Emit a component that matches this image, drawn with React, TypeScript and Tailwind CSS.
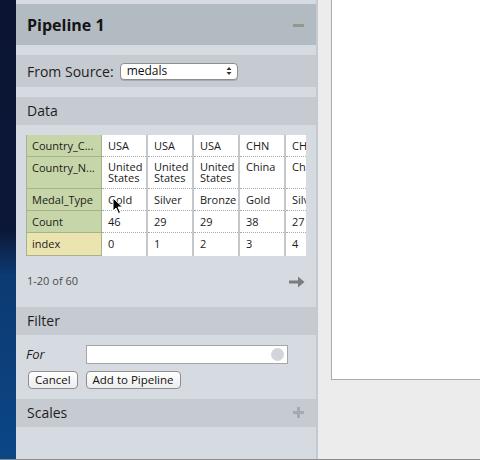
import React from 'react';

const FONT = { fontFamily: '"Open Sans", "Lucida Grande", "DejaVu Sans", sans-serif' };

const headers = ['Country_C...', 'Country_N...', 'Medal_Type', 'Count', 'index'];
const rowHeights = ['h-[22px]', 'h-[32px]', 'h-[22px]', 'h-[22px]', 'h-[23px]'];

const columns = [
  ['USA', 'United States', 'Gold', '46', '0'],
  ['USA', 'United States', 'Silver', '29', '1'],
  ['USA', 'United States', 'Bronze', '29', '2'],
  ['CHN', 'China', 'Gold', '38', '3'],
  ['CHN', 'China', 'Silver', '27', '4'],
];

const SectionHeader: React.FC<{ title: string; icon?: React.ReactNode }> = ({ title, icon }) => (
  <div className="flex h-[28px] items-center justify-between bg-[#c6cbd1] pb-[2px] pl-[11px] pr-[12px] text-[14px] text-[#1e1e1e]">
    <span>{title}</span>
    {icon}
  </div>
);

const Cursor = () => (
  <svg width="12" height="18" viewBox="0 0 12 18" className="absolute left-[112px] top-[197px]">
    <path d="M1 1 L1 14 L4 11 L6.5 16.5 L8.5 15.5 L6 10 L10.5 10 Z" fill="#000" stroke="#fff" strokeWidth="1" />
  </svg>
);

const DataTable = () => (
  <div className="flex w-[280px] overflow-hidden bg-[#c4c8cc] text-[11px] leading-[12px] text-[#1a1a1a]">
    {/* header column */}
    <div className="flex w-[76px] shrink-0 flex-col">
      {headers.map((h, i) => (
        <div
          key={h}
          className={`${rowHeights[i]} overflow-hidden whitespace-nowrap border border-t-0 border-[#a4b38a] px-[5px] pt-[5px] ${
            i === 4 ? 'bg-[#ece4b0]' : 'bg-[#c7d6a8]'
          } ${i === 0 ? 'border-t' : ''}`}
        >
          {h}
        </div>
      ))}
    </div>
    {/* data columns */}
    <div className="flex gap-[2px]">
      {columns.map((col, ci) => (
        <div key={ci} className="flex w-[44px] shrink-0 flex-col bg-white">
          {col.map((v, ri) => (
            <div
              key={ri}
              className={`${rowHeights[ri]} overflow-hidden pl-[6px] ${
                ri === 1 ? 'pt-[4px] leading-[11px] whitespace-normal' : 'pt-[5px] whitespace-nowrap'
              } ${ri < 4 ? 'border-b border-dotted border-[#a8a8a8]' : ''}`}
            >
              {v}
            </div>
          ))}
        </div>
      ))}
    </div>
  </div>
);

export default function App() {
  return (
    <div className="relative flex h-[460px] w-[480px] overflow-hidden border-b border-[#8a8a8a]" style={FONT}>
      {/* left desktop strip */}
      <div className="w-[16px] shrink-0 bg-[linear-gradient(180deg,#0b1433_0%,#0c1737_50%,#0c3a72_60%,#0b4686_100%)]" />

      {/* sidebar */}
      <div className="flex w-[302px] shrink-0 flex-col border-r-2 border-[#c3cad2] bg-[#d6dbe1] pt-[4px]">
        <div className="flex h-[41px] items-center justify-between bg-[#b2bac2] pl-[11px] pr-[12px]">
          <span className="text-[16px] font-bold text-[#141414]">Pipeline 1</span>
          <span className="mt-[2px] h-[3px] w-[11px] bg-[#8f9a8e]" />
        </div>

        <div className="mt-[10px] flex h-[32px] items-center gap-[6px] bg-[#c6cbd1] pl-[11px] text-[14px] text-[#1e1e1e]">
          <span>From Source:</span>
          <div className="flex h-[17px] w-[118px] items-center justify-between rounded-[4px] border border-[#8e8e8e] bg-white pl-[6px] pr-[5px] text-[12px] text-[#111] shadow-[0_1px_0_rgba(0,0,0,0.15)]">
            <span>medals</span>
            <svg width="6" height="10" viewBox="0 0 6 10">
              <path d="M0.5 4 L3 1 L5.5 4 Z M0.5 6 L3 9 L5.5 6 Z" fill="#333" />
            </svg>
          </div>
        </div>

        <div className="mt-[10px]">
          <SectionHeader title="Data" />
        </div>
        <div className="flex h-[182px] flex-col pl-[10px] pr-[10px] pt-[10px]">
          <DataTable />
          <div className="mt-[17px] flex items-center justify-between pl-[1px]">
            <span className="text-[11px] text-[#4a4a4a]">1-20 of 60</span>
            <svg width="16" height="12" viewBox="0 0 16 12" className="mr-[1px] mt-[2px]">
              <path d="M0 4.5 H9 V0.5 L15.5 6 L9 11.5 V7.5 H0 Z" fill="#7f7b82" />
            </svg>
          </div>
        </div>

        <SectionHeader title="Filter" />
        <div className="flex h-[64px] flex-col pl-[10px] pt-[10px]">
          <div className="flex items-center">
            <span className="w-[60px] text-[13px] italic text-[#1e1e1e]">For</span>
            <div className="flex h-[19px] w-[202px] items-center justify-end border border-[#a6a6a6] bg-white pr-[3px]">
              <span className="h-[13px] w-[13px] rounded-full bg-[#d2d6dc]" />
            </div>
          </div>
          <div className="mt-[6px] flex gap-[8px] pl-[2px]">
            <button className="h-[18px] rounded-[4px] border border-[#8e8e8e] bg-[linear-gradient(180deg,#ffffff,#ececec)] px-[6px] text-[11.5px] leading-[16px] text-[#111]">
              Cancel
            </button>
            <button className="h-[18px] rounded-[4px] border border-[#8e8e8e] bg-[linear-gradient(180deg,#ffffff,#ececec)] px-[6px] text-[11.5px] leading-[16px] text-[#111]">
              Add to Pipeline
            </button>
          </div>
        </div>

        <SectionHeader
          title="Scales"
          icon={
            <svg width="11" height="11" viewBox="0 0 11 11">
              <path d="M4 0 H7 V4 H11 V7 H7 V11 H4 V7 H0 V4 H4 Z" fill="#a3aab2" />
            </svg>
          }
        />
        <div className="flex-1" />
      </div>

      {/* right canvas */}
      <div className="flex flex-1 bg-[#ececec] pl-[13px]">
        <div className="h-[380px] flex-1 border border-r-0 border-t-0 border-[#ababab] bg-white" />
      </div>

      <Cursor />
    </div>
  );
}
